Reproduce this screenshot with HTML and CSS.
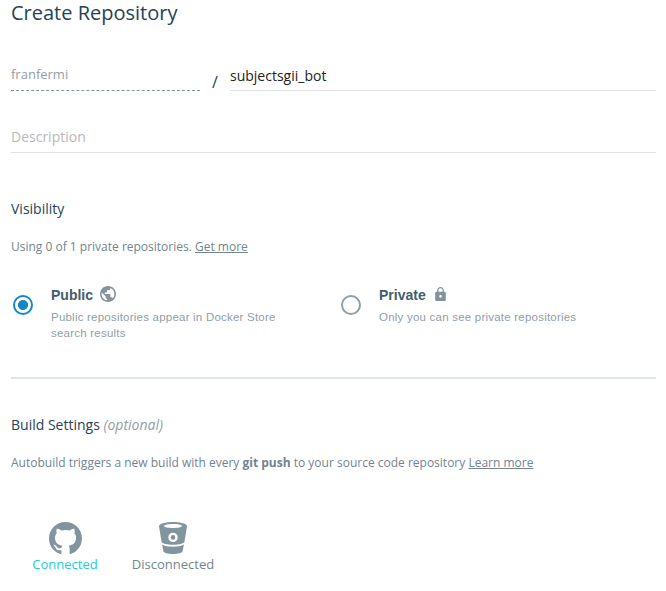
FILE: index.html
```html
<!DOCTYPE html>
<html lang="en">
<head>
<meta charset="utf-8">
<title>Create Repository</title>
<link rel="stylesheet" href="styles.css">
</head>
<body>
<main class="page">
  <h1 class="title">Create Repository</h1>
  <div class="name-row">
    <div class="namespace">franfermi</div>
    <span class="slash">/</span>
    <div class="repo-name">subjectsgii_bot</div>
  </div>
  <div class="description">Description</div>

  <section class="visibility">
    <h2 class="heading">Visibility</h2>
    <p class="note"><span class="usage">Using 0 of 1 private repositories.</span> <a class="link">Get more</a></p>
    <div class="options">
      <div class="option">
        <span class="radio radio-on"></span>
        <div class="option-body">
          <div class="option-title"><span class="public-label">Public</span>
            <svg class="globe" viewBox="2 2 20 20"><path d="M12 2C6.48 2 2 6.48 2 12s4.48 10 10 10 10-4.480 10-10S17.520 2 12 2zm-1 17.930c-3.950-.490-7-3.850-7-7.930 0-.620.080-1.210.210-1.790L9 15v1c0 1.100.900 2 2 2v1.930zm6.900-2.540c-.260-.810-1-1.390-1.900-1.390h-1v-3c0-.550-.450-1-1-1H8v-2h2c.550 0 1-.450 1-1V7h2c1.100 0 2-.900 2-2v-.410c2.930 1.190 5 4.060 5 7.410 0 2.080-.800 3.970-2.100 5.390z"/></svg>
          </div>
          <p class="option-text">Public repositories appear in Docker Store search results</p>
        </div>
      </div>
      <div class="option">
        <span class="radio"></span>
        <div class="option-body">
          <div class="option-title"><span class="private-label">Private</span>
            <svg class="lock" viewBox="4 1 16 21"><path d="M18 8h-1V6c0-2.760-2.240-5-5-5S7 3.240 7 6v2H6c-1.100 0-2 .900-2 2v10c0 1.100.900 2 2 2h12c1.100 0 2-.900 2-2V10c0-1.100-.900-2-2-2zm-6 9c-1.100 0-2-.900-2-2s.900-2 2-2 2 .900 2 2-.900 2-2 2zm3.100-9H8.900V6c0-1.710 1.390-3.100 3.100-3.100s3.100 1.390 3.100 3.100v2z"/></svg>
          </div>
          <p class="option-text private-text">Only you can see private repositories</p>
        </div>
      </div>
    </div>
  </section>

  <section class="build">
    <h2 class="heading">Build Settings <em class="optional">(optional)</em></h2>
    <p class="note">Autobuild triggers a new build with every <b>git push</b> to your source code repository <a class="link">Learn more</a></p>
    <div class="providers">
      <div class="provider connected">
        <svg class="github" viewBox="0 0 16 15.600" preserveAspectRatio="none"><path d="M8 0C3.580 0 0 3.580 0 8c0 3.540 2.290 6.530 5.470 7.590.400.070.550-.170.550-.380 0-.190-.010-.820-.010-1.490-2.010.370-2.530-.490-2.690-.940-.090-.230-.480-.940-.820-1.130-.280-.150-.680-.520-.010-.530.630-.010 1.080.580 1.230.820.720 1.210 1.870.870 2.330.660.070-.520.280-.870.510-1.070-1.780-.200-3.640-.890-3.640-3.950 0-.870.310-1.590.820-2.150-.080-.200-.360-1.020.080-2.120 0 0 .670-.210 2.200.820.640-.180 1.320-.270 2-.270s1.360.090 2 .270c1.530-1.040 2.200-.820 2.200-.820.440 1.100.160 1.920.080 2.120.510.560.820 1.270.820 2.150 0 3.070-1.870 3.750-3.650 3.950.290.250.540.730.540 1.480 0 1.070-.010 1.930-.010 2.200 0 .210.150.460.550.380A8.010 8.010 0 0 0 16 8c0-4.420-3.580-8-8-8z"/></svg>
        <span>Connected</span>
      </div>
      <div class="provider">
        <svg class="bitbucket" viewBox="0 0 28 32"><path fill-rule="evenodd" d="M14 0C6.300 0 0 1.800 0 4.200L2.600 20c.5 1.500 5.300 2.700 11.400 2.700S24.900 21.500 25.400 20L28 4.200C28 1.800 21.700 0 14 0zM14 2c5 0 9 .9 9 2s-4 2-9 2-9-.9-9-2 4-2 9-2zM14 10.700a4.700 4.700 0 1 1 0 9.400 4.700 4.700 0 0 1 0-9.400zM14 13.100a2.300 2.300 0 1 0 0 4.600 2.300 2.300 0 0 0 0-4.600zM3.100 22.600c2.500 1.500 6.400 2.200 10.900 2.200s8.400-.7 10.900-2.200L23.700 29c-.4 1.800-4.500 3-9.700 3s-9.300-1.200-9.700-3z"/></svg>
        <span>Disconnected</span>
      </div>
    </div>
  </section>
</main>
</body>
</html>
```
FILE: styles.css
```css
* { box-sizing: border-box; }
body {
  margin: 0;
  background: #fff;
  color: #254356;
  font-family: "Open Sans", sans-serif;
}
h1, h2, p { margin: 0; font-weight: 400; }
svg { display: block; fill: #82949e; }
.page { padding: 0 10px 0 11px; }
.title { font-size: 20px; line-height: 26px; height: 61px; }
.name-row { display: flex; height: 30px; }
.namespace {
  width: 189px;
  border-bottom: 1px dashed #82949e;
  color: #8f9ea8;
  font-size: 13px;
  line-height: 27px;
}
.slash { width: 30px; text-align: center; font-size: 16px; line-height: 42px; }
.repo-name {
  flex: 1;
  border-bottom: 1px solid #e0e0e0;
  color: #222;
  font-size: 14px;
  line-height: 30px;
}
.description {
  height: 62px;
  padding-top: 32px;
  border-bottom: 1px solid #e0e0e0;
  color: #b8b8b8;
  font-size: 14px;
  line-height: 28px;
}
.visibility { height: 226px; padding-top: 46px; border-bottom: 2px solid #dfe4e8; }
.heading { font-size: 14px; line-height: 20px; }
.note { margin-top: 19px; color: #718490; font-size: 12px; line-height: 18px; white-space: nowrap; }
.link { text-decoration: underline; }
.options { display: flex; margin-top: 30px; }
.option { display: flex; flex: none; width: 328px; }
.option:last-child { width: 317px; }
.radio {
  flex: none;
  width: 20px;
  height: 20px;
  margin: 9px 18px 0 2px;
  border: 2px solid #8f9ea8;
  border-radius: 50%;
}
.radio-on { border-color: #1488c6; background: radial-gradient(circle, #1488c6 4.700px, transparent 5.300px); }
.option-body { width: 240px; font-family: "Liberation Sans", Arial, sans-serif; }
.option-title {
  display: flex;
  gap: 7px;
  height: 20px;
  color: #445d6e;
  font-size: 14px;
  font-weight: 700;
  line-height: 18px;
}
.globe { width: 16px; height: 16px; }
.lock { width: 11px; height: 14px; margin: 1px 0 0 2.500px; }
.option-text {
  margin-top: 3px;
  color: #8f9ea8;
  font-size: 11.500px;
  letter-spacing: 0.220px;
  line-height: 16px;
}
.build { padding-top: 36px; }
.optional { color: #8f9ea8; }
.providers { display: flex; margin-top: 50px; }
.provider {
  display: flex;
  flex-direction: column;
  align-items: center;
  width: 108px;
  color: #718490;
  font-size: 13px;
  line-height: 20px;
}
.connected { color: #1cccd8; }
.github { width: 33px; height: 32px; }
.bitbucket { width: 28px; height: 32px; }
```
